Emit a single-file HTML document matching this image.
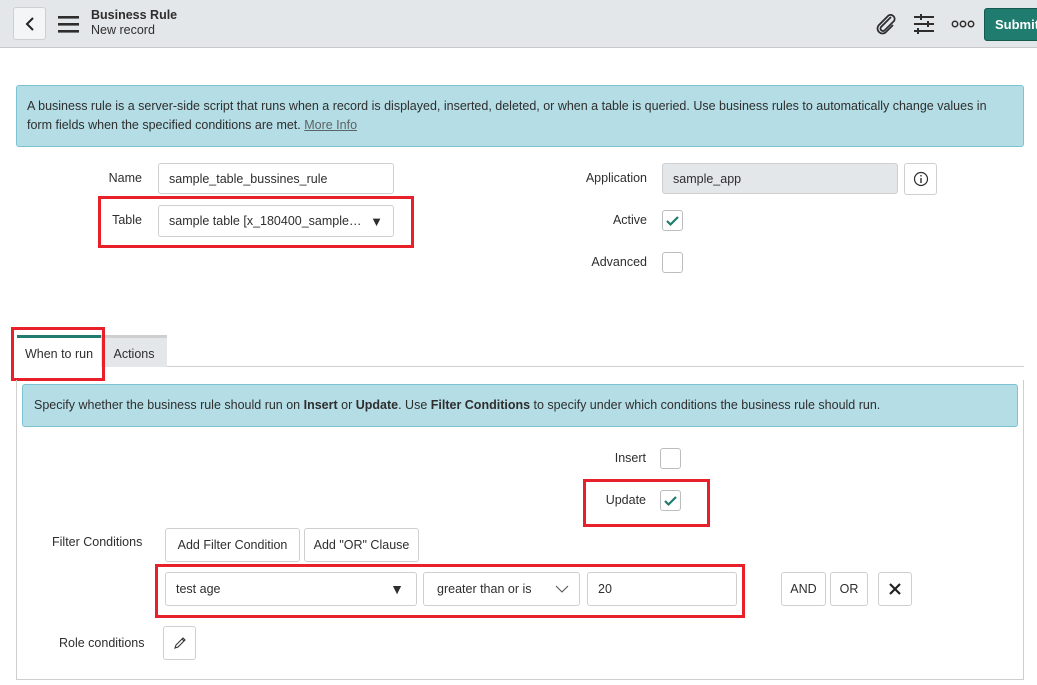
<!DOCTYPE html>
<html><head><meta charset="utf-8"><style>
*{box-sizing:border-box;margin:0;padding:0}
body{width:1037px;height:685px;overflow:hidden;background:#fff;font-family:"Liberation Sans",sans-serif;font-size:12.5px;color:#2e2e2e;position:relative}
.a{position:absolute}
.btn{position:absolute;border:1px solid #cfcfcf;border-radius:3px;background:#fff;display:flex;align-items:center;justify-content:center;font-size:12.5px;color:#2e2e2e}
.inp{position:absolute;border:1px solid #cfcfcf;border-radius:3px;background:#fff;display:flex;align-items:center;padding-left:10px;font-size:12.5px}
.red{position:absolute;border:3px solid #e8202a}
.cb{position:absolute;width:21px;height:21px;border:1px solid #bdbdbd;border-radius:3px;background:#fff}
.lbl{position:absolute;text-align:right;font-size:12.5px}
</style></head><body>
<div class="a" style="left:0;top:0;width:1037px;height:48px;background:#e4e7ea;border-bottom:1px solid #c9c9c9"></div>
<div class="btn" style="left:13px;top:7px;width:33px;height:33px;background:#f4f5f6"><svg width="12" height="16" viewBox="0 0 12 16"><path d="M9 2L3 8l6 6" stroke="#222" stroke-width="2" fill="none"/></svg></div>
<svg class="a" style="left:58px;top:16px" width="21" height="17"><rect y="0" width="21" height="2.6" fill="#2e2e2e"/><rect y="7" width="21" height="2.6" fill="#2e2e2e"/><rect y="14" width="21" height="2.6" fill="#2e2e2e"/></svg>
<div class="a" style="left:91px;top:8px;font-size:12.5px;font-weight:bold;color:#2e2e2e">Business Rule</div>
<div class="a" style="left:91px;top:23px;font-size:12.5px;color:#2e2e2e">New record</div>
<svg class="a" style="left:874px;top:12px" width="24" height="24" viewBox="0 0 24 24"><path d="M17 5L7 15a2.5 2.5 0 0 0 3.5 3.5L20 9a4 4 0 0 0-5.5-5.5L4.5 13.5a5 5 0 0 0 7 7L19 13" stroke="#2e2e2e" stroke-width="1.8" fill="none"/></svg>
<svg class="a" style="left:913px;top:13px" width="22" height="22"><g stroke="#2e2e2e" stroke-width="2"><line x1="1" y1="4" x2="21" y2="4"/><line x1="1" y1="11" x2="21" y2="11"/><line x1="1" y1="18" x2="21" y2="18"/><line x1="8" y1="1" x2="8" y2="7"/><line x1="15" y1="8" x2="15" y2="14"/><line x1="5" y1="15" x2="5" y2="21"/></g></svg>
<svg class="a" style="left:951px;top:20px" width="24" height="8"><g stroke="#2e2e2e" stroke-width="1.5" fill="none"><circle cx="4" cy="4" r="2.7"/><circle cx="12" cy="4" r="2.7"/><circle cx="20" cy="4" r="2.7"/></g></svg>
<div class="a" style="left:984px;top:8px;width:60px;height:33px;background:#1f7c6e;border:1px solid #15594f;border-radius:3px;color:#fff;font-weight:bold;font-size:13px;padding:8px 0 0 10px">Submit</div>

<div class="a" style="left:16px;top:85px;width:1008px;height:62px;background:#b5dde5;border:1px solid #79c3d3;border-radius:3px;padding:11px 10px;font-size:12.5px;line-height:19px;color:#2e2e2e">A business rule is a server-side script that runs when a record is displayed, inserted, deleted, or when a table is queried. Use business rules to automatically change values in form fields when the specified conditions are met. <span style="color:#5b6466;text-decoration:underline">More Info</span></div>

<div class="lbl" style="left:60px;top:171px;width:82px">Name</div>
<div class="inp" style="left:158px;top:163px;width:236px;height:31px">sample_table_bussines_rule</div>
<div class="red" style="left:98px;top:196px;width:316px;height:52px"></div>
<div class="lbl" style="left:60px;top:213px;width:82px">Table</div>
<div class="inp" style="left:158px;top:205px;width:236px;height:32px">sample table [x_180400_sample…<span style="position:absolute;right:10px;font-size:13px">▼</span></div>

<div class="lbl" style="left:540px;top:171px;width:107px">Application</div>
<div class="inp" style="left:662px;top:163px;width:236px;height:31px;background:#e4e7ea">sample_app</div>
<div class="btn" style="left:904px;top:163px;width:33px;height:32px"><svg width="16" height="16"><circle cx="8" cy="8" r="6.5" stroke="#2e2e2e" stroke-width="1.2" fill="none"/><rect x="7.3" y="7" width="1.4" height="5" fill="#2e2e2e"/><rect x="7.3" y="4" width="1.4" height="1.5" fill="#2e2e2e"/></svg></div>
<div class="lbl" style="left:540px;top:213px;width:107px">Active</div>
<div class="cb" style="left:662px;top:210px"><svg width="19" height="19"><path d="M4 10l3.5 3.5L15 6" stroke="#1f7c6e" stroke-width="2.2" fill="none"/></svg></div>
<div class="lbl" style="left:540px;top:255px;width:107px">Advanced</div>
<div class="cb" style="left:662px;top:252px"></div>

<div class="a" style="left:17px;top:366px;width:1007px;height:1px;background:#cfcfcf"></div>
<div class="a" style="left:101px;top:335px;width:66px;height:32px;background:#e4e7ea;border-top:3px solid #cfcfcf;padding-top:9px;text-align:center">Actions</div>
<div class="a" style="left:17px;top:335px;width:84px;height:33px;background:#fff;border-top:3px solid #1f7c6e;padding-top:9px;text-align:center">When to run</div>
<div class="red" style="left:11px;top:327px;width:94px;height:54px"></div>
<div class="a" style="left:16px;top:380px;width:1008px;height:300px;border:1px solid #cfcfcf;border-top:none"></div>

<div class="a" style="left:22px;top:384px;width:996px;height:43px;background:#b5dde5;border:1px solid #79c3d3;border-radius:3px;padding:13px 11px;font-size:12.5px">Specify whether the business rule should run on <b>Insert</b> or <b>Update</b>. Use <b>Filter Conditions</b> to specify under which conditions the business rule should run.</div>

<div class="lbl" style="left:560px;top:451px;width:86px">Insert</div>
<div class="cb" style="left:660px;top:448px"></div>
<div class="red" style="left:583px;top:479px;width:127px;height:48px"></div>
<div class="lbl" style="left:560px;top:493px;width:86px">Update</div>
<div class="cb" style="left:660px;top:490px"><svg width="19" height="19"><path d="M4 10l3.5 3.5L15 6" stroke="#1f7c6e" stroke-width="2.2" fill="none"/></svg></div>

<div class="a" style="left:52px;top:535px">Filter Conditions</div>
<div class="btn" style="left:165px;top:528px;width:135px;height:34px">Add Filter Condition</div>
<div class="btn" style="left:304px;top:528px;width:115px;height:34px">Add "OR" Clause</div>
<div class="red" style="left:155px;top:564px;width:590px;height:54px"></div>
<div class="inp" style="left:165px;top:572px;width:252px;height:34px">test age<span style="position:absolute;right:12px;font-size:14px">▼</span></div>
<div class="inp" style="left:423px;top:572px;width:157px;height:34px;padding-left:13px">greater than or is<svg style="position:absolute;right:10px" width="14" height="8"><path d="M1 1l6 6 6-6" stroke="#555" stroke-width="1.1" fill="none"/></svg></div>
<div class="inp" style="left:587px;top:572px;width:150px;height:34px">20</div>
<div class="btn" style="left:781px;top:572px;width:45px;height:34px">AND</div>
<div class="btn" style="left:830px;top:572px;width:38px;height:34px">OR</div>
<div class="btn" style="left:878px;top:572px;width:34px;height:34px"><svg width="14" height="14"><path d="M2 2l10 10M12 2L2 12" stroke="#222" stroke-width="2.2"/></svg></div>
<div class="a" style="left:59px;top:636px">Role conditions</div>
<div class="btn" style="left:163px;top:626px;width:33px;height:34px"><svg width="14" height="14"><path d="M2 12l1-3 7-7 2 2-7 7zM9 3l2 2" stroke="#333" stroke-width="1.1" fill="none"/></svg></div>
</body></html>
